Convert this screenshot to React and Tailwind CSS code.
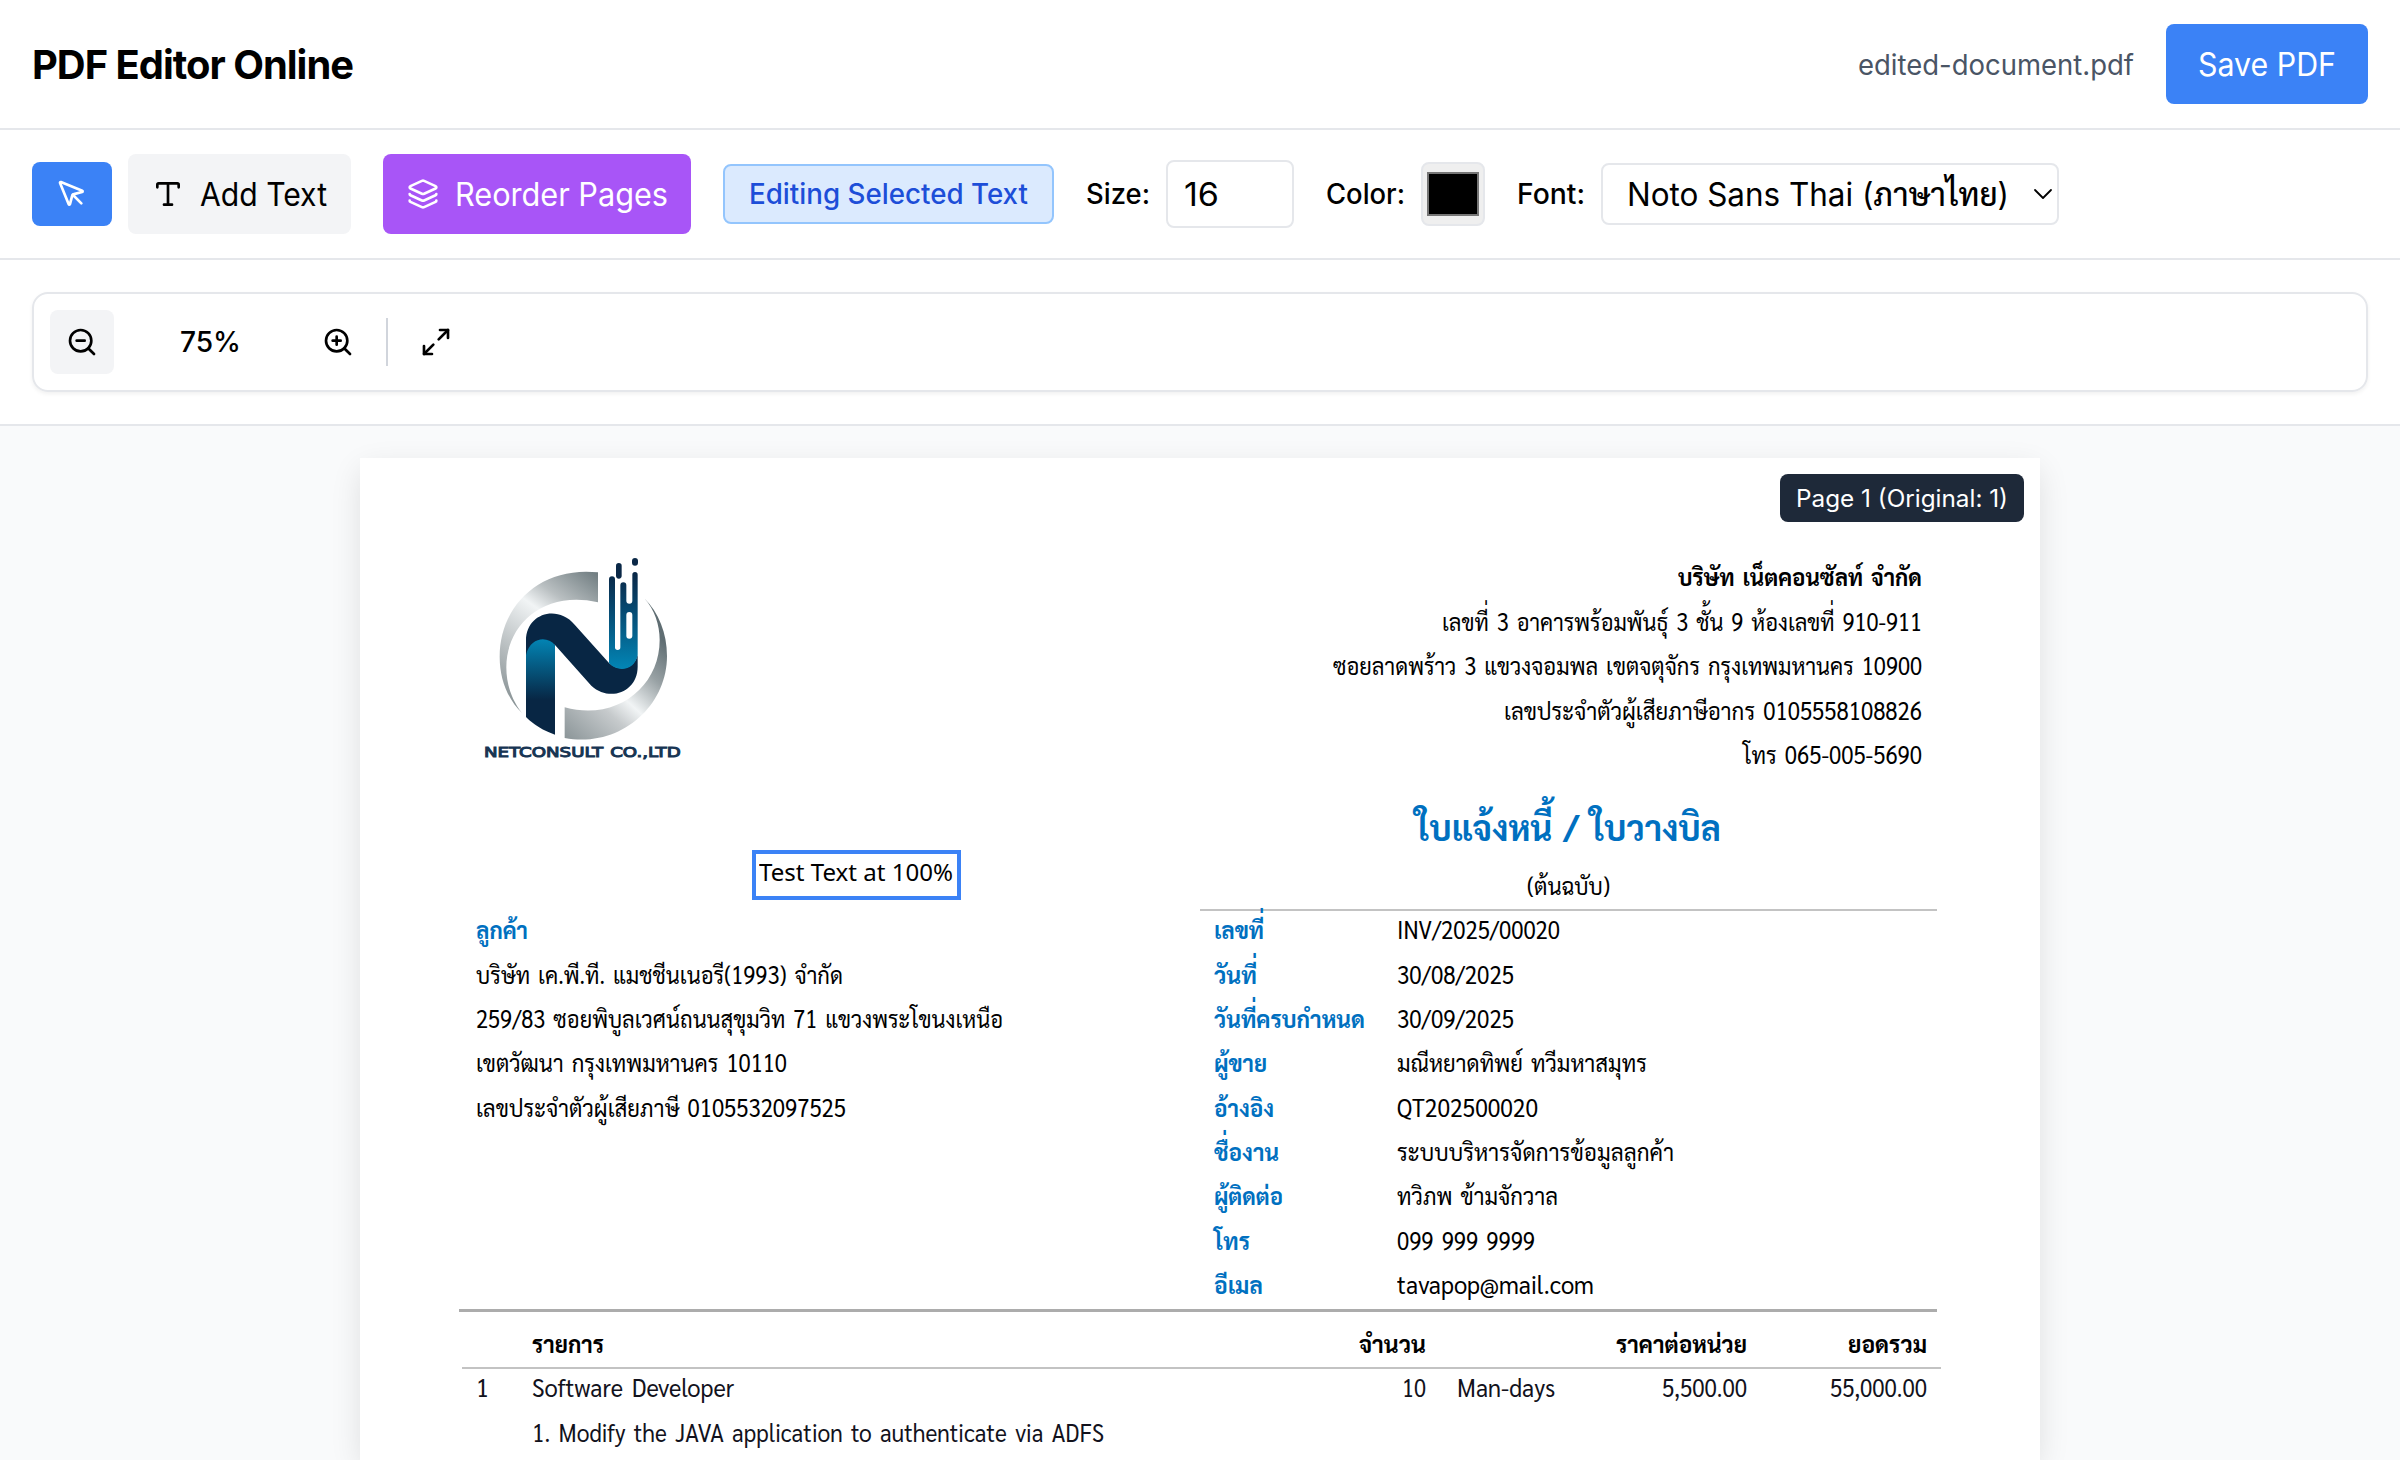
import { useLayoutEffect, useRef } from "react";
import { Layers, Maximize2, MousePointer, Type, ZoomIn, ZoomOut } from "lucide-react";

const UI = "font-['Inter','Sarabun','Noto_Sans',sans-serif]";
const DOC = "font-['Sarabun','Noto_Sans',sans-serif] [word-spacing:3px]";

/* Sets a single line of text to an exact width. */
function Fit({ w, children, className = "" }) {
  const outer = useRef(null);
  const inner = useRef(null);
  useLayoutEffect(() => {
    inner.current.style.transform = "none";
    const natural = inner.current.getBoundingClientRect().width;
    outer.current.style.width = `${w}px`;
    inner.current.style.transform = `scaleX(${w / natural})`;
  }, [w, children]);
  return (
    <span ref={outer} className={`inline-flex shrink-0 whitespace-nowrap ${className}`}>
      <span ref={inner} className="inline-block shrink-0 origin-left whitespace-nowrap">
        {children}
      </span>
    </span>
  );
}

/* Interface text sits slightly below the optical centre of its control. */
function Label({ w, children }) {
  return (
    <Fit w={w} className="pt-0.5">
      {children}
    </Fit>
  );
}

function Header() {
  return (
    <header className="flex h-[130px] items-center justify-between border-b-2 border-gray-200 px-8">
      <h1 className="flex text-[40px] leading-[56px] font-bold tracking-tight">
        <Label w={321}>PDF Editor Online</Label>
      </h1>
      <div className="flex items-center gap-8">
        <span className="flex text-[28px] leading-10 text-gray-600">
          <Label w={276}>edited-document.pdf</Label>
        </span>
        <button className="flex h-20 w-[202px] items-center justify-center rounded-lg bg-[#3b82f6] text-[32px] leading-[48px] text-white">
          <Label w={138}>Save PDF</Label>
        </button>
      </div>
    </header>
  );
}

function Toolbar() {
  return (
    <div className="flex h-[130px] items-center border-b-2 border-gray-200 px-8 text-[32px] leading-[48px]">
      <button className="flex h-16 w-20 items-center justify-center rounded-lg bg-[#3b82f6] text-white">
        <MousePointer size={32} />
      </button>
      <button className="ml-4 flex h-20 w-[223px] items-center gap-4 rounded-lg bg-gray-100 pl-6">
        <Type size={32} />
        <Label w={127}>Add Text</Label>
      </button>
      <button className="ml-8 flex h-20 w-[308px] items-center gap-4 rounded-lg bg-[#a855f7] pl-6 text-white">
        <Layers size={32} />
        <Label w={213}>Reorder Pages</Label>
      </button>
      <div className="ml-8 flex h-[60px] w-[331px] items-center justify-center rounded-lg border-2 border-[#93c5fd] bg-[#dbeafe] text-[28px] font-medium text-[#1d4ed8]">
        <Fit w={279}>Editing Selected Text</Fit>
      </div>
      <label className="ml-8 flex items-center gap-4 text-[28px] font-medium">
        <Fit w={64}>Size:</Fit>
        <span className="flex h-[68px] w-32 items-center rounded-lg border-2 border-gray-200 pl-4 text-[32px] font-normal">
          <Label w={35}>16</Label>
        </span>
      </label>
      <label className="ml-8 flex items-center gap-4 text-[28px] font-medium">
        <Fit w={79}>Color:</Fit>
        <span className="flex size-16 items-center justify-center rounded-lg border-2 border-gray-200 bg-[#efefef]">
          <span className="h-11 w-[52px] border-2 border-[#767676] bg-black" />
        </span>
      </label>
      <label className="ml-8 flex items-center gap-4 text-[28px] font-medium">
        <Fit w={68}>Font:</Fit>
        <span className="flex h-[62px] w-[458px] items-center rounded-lg border-2 border-gray-200 pl-6 text-[32px] font-normal">
          <Label w={382}>
            Noto Sans Thai (<span className="font-medium">ภาษาไทย</span>)
          </Label>
          <svg className="ml-[24px]" width="20" height="12" viewBox="0 0 20 12" fill="none" stroke="currentColor" strokeWidth="1.8" strokeLinecap="round" strokeLinejoin="round">
            <path d="M2 2l8 8 8-8" />
          </svg>
        </span>
      </label>
    </div>
  );
}

function ZoomBar() {
  return (
    <div className="border-b-2 border-gray-200 px-8 pt-8 pb-8">
      <div className="flex h-[100px] items-center gap-4 rounded-2xl border-2 border-gray-200 px-4 shadow-[0_2px_4px_rgba(0,0,0,0.06)]">
        <button className="flex size-16 items-center justify-center rounded-lg bg-gray-100">
          <ZoomOut size={32} />
        </button>
        <span className="flex w-40 justify-center text-[28px] leading-10 font-medium">
          <Fit w={61}>75%</Fit>
        </span>
        <button className="flex size-16 items-center justify-center">
          <ZoomIn size={32} />
        </button>
        <span className="h-12 w-0.5 bg-gray-300" />
        <button className="flex size-16 items-center justify-center">
          <Maximize2 size={32} />
        </button>
      </div>
    </div>
  );
}

function Logo() {
  return (
    <svg width="260" height="250" viewBox="0 0 780 750" role="img" aria-label="Netconsult">
      <defs>
        <linearGradient id="ringTop" x1="120" y1="540" x2="415" y2="130" gradientUnits="userSpaceOnUse">
          <stop offset="0" stopColor="#7d888b" />
          <stop offset="0.3" stopColor="#b4babc" />
          <stop offset="0.62" stopColor="#f1f4f5" />
          <stop offset="0.75" stopColor="#b9bfc1" />
          <stop offset="1" stopColor="#6f7c80" />
        </linearGradient>
        <linearGradient id="ringBottom" x1="610" y1="330" x2="330" y2="640" gradientUnits="userSpaceOnUse">
          <stop offset="0" stopColor="#5f6d72" />
          <stop offset="0.25" stopColor="#98a1a4" />
          <stop offset="0.5" stopColor="#f1f4f5" />
          <stop offset="0.65" stopColor="#c6cacc" />
          <stop offset="1" stopColor="#8b9598" />
        </linearGradient>
        <linearGradient id="stemLeft" x1="0" y1="325" x2="0" y2="510" gradientUnits="userSpaceOnUse">
          <stop offset="0" stopColor="#0285b5" />
          <stop offset="1" stopColor="#082644" />
        </linearGradient>
        <linearGradient id="stemRight" x1="0" y1="130" x2="0" y2="415" gradientUnits="userSpaceOnUse">
          <stop offset="0" stopColor="#0a2847" />
          <stop offset="0.35" stopColor="#07466d" />
          <stop offset="1" stopColor="#0285b5" />
        </linearGradient>
      </defs>
      <path d="M414 127C240 108 119 228 119 380C119 450 145 510 186 549C155 510 139 462 139 412C139 285 250 180 414 217Z" fill="url(#ringTop)" />
      <path d="M553 205C584 240 599 285 599 330C599 470 470 575 314 532V624C480 655 621 530 621 378C621 310 596 248 553 205Z" fill="url(#ringBottom)" />
      <path d="M198 365C210 315 275 315 285 345V614C250 602 222 585 198 561Z" fill="url(#stemLeft)" />
      <path d="M198 375V332C198 252 290 222 344 284L447 399C475 425 520 420 533 375V410C533 485 450 518 394 467L285 345C262 318 212 320 198 375Z" fill="#082644" />
      <path d="M447 399V148A9 9 0 0 1 465 148V352A8 8 0 0 0 481 352V166A9 9 0 0 1 499 166V212A9 9 0 0 0 517 212V134A8 8 0 0 1 533 134V375C525 420 475 430 447 399Z" fill="url(#stemRight)" />
      <rect x="499" y="246" width="18" height="80" rx="9" fill="#fff" />
      <rect x="468" y="99" width="17" height="47" rx="8.5" fill="#0a2847" />
      <rect x="516" y="84" width="18" height="23" rx="9" fill="#0a2847" />
      <text x="72" y="682" fontFamily="'DejaVu Sans', sans-serif" fontSize="42" fill="#173553" stroke="#173553" strokeWidth="3" textLength="590" lengthAdjust="spacingAndGlyphs">
        NETCONSULT CO.,LTD
      </text>
    </svg>
  );
}

const ROW = "flex h-[44.35px] items-center leading-[44px]";

const company = [
  ["เลขที่ 3 อาคารพร้อมพันธุ์ 3 ชั้น 9 ห้องเลขที่ 910-911", 480],
  ["ซอยลาดพร้าว 3 แขวงจอมพล เขตจตุจักร กรุงเทพมหานคร 10900", 589],
  ["เลขประจำตัวผู้เสียภาษีอากร 0105558108826", 418],
  ["โทร 065-005-5690", 179],
];

const customer = [
  ["บริษัท เค.พี.ที. แมชชีนเนอรี(1993) จำกัด", 367],
  ["259/83 ซอยพิบูลเวศน์ถนนสุขุมวิท 71 แขวงพระโขนงเหนือ", 527],
  ["เขตวัฒนา กรุงเทพมหานคร 10110", 311],
  ["เลขประจำตัวผู้เสียภาษี 0105532097525", 370],
];

const details = [
  ["เลขที่", 50, "INV/2025/00020", 163],
  ["วันที่", 43, "30/08/2025", 117],
  ["วันที่ครบกำหนด", 151, "30/09/2025", 117],
  ["ผู้ขาย", 53, "มณีหยาดทิพย์ ทวีมหาสมุทร", 250],
  ["อ้างอิง", 60, "QT202500020", 141],
  ["ชื่องาน", 65, "ระบบบริหารจัดการข้อมูลลูกค้า", 277],
  ["ผู้ติดต่อ", 69, "ทวิภพ ข้ามจักวาล", 161],
  ["โทร", 36, "099 999 9999", 138],
  ["อีเมล", 49, "tavapop@mail.com", 197],
];

function Page() {
  return (
    <div className={`relative h-[1002px] w-[1680px] bg-white text-[24.5px] text-black shadow-[0_10px_30px_-2px_rgba(0,0,0,0.12)] ${DOC}`}>
      <div className={`absolute top-4 right-4 flex h-12 w-[244px] items-center justify-center rounded-lg bg-gray-800 text-[24px] leading-8 text-white [word-spacing:normal] ${UI}`}>
        <Label w={212}>Page 1 (Original: 1)</Label>
      </div>
      <div className="absolute top-[392px] left-[392px] flex h-[50px] w-[209px] border-4 border-[#3b82f6] pl-[3px] font-['Noto_Sans',sans-serif] text-[24px] leading-9 [word-spacing:normal]">
        <Fit w={194}>Test Text at 100%</Fit>
      </div>

      <section className="flex h-[449px] justify-between pl-[100px]">
        <div className="pt-[72px]">
          <Logo />
        </div>
        <div className="flex w-[840px] flex-col pt-[96px]">
          <div className="flex flex-col items-end pr-[118px]">
            <div className={`${ROW} font-bold`}>
              <Fit w={244}>บริษัท เน็ตคอนซัลท์ จำกัด</Fit>
            </div>
            {company.map(([t, w]) => (
              <div key={t} className="flex h-[44.5px] items-center leading-[44px]">
                <Fit w={w}>{t}</Fit>
              </div>
            ))}
          </div>
          <div className="mt-[20px] flex w-[736px] flex-col items-center">
            <div className="flex h-[66px] text-[36px] leading-[60px] font-bold text-[#0070c0]">
              <Fit w={306}>ใบแจ้งหนี้ / ใบวางบิล</Fit>
            </div>
            <div className={ROW}>
              <Fit w={83}>(ต้นฉบับ)</Fit>
            </div>
          </div>
        </div>
      </section>

      <section className="flex justify-between pr-[103px] pl-[116px]">
        <div className="flex flex-col">
          <div className={`${ROW} font-bold text-[#0070c0]`}>
            <Fit w={52}>ลูกค้า</Fit>
          </div>
          {customer.map(([t, w]) => (
            <div key={t} className={ROW}>
              <Fit w={w}>{t}</Fit>
            </div>
          ))}
        </div>
        <div className="flex w-[737px] flex-col pt-0.5">
          <div className="h-0.5 shrink-0 bg-[#c3c3c3]" />
          <div className="-mt-1 pl-3.5">
            {details.map(([label, lw, value, vw]) => (
              <div key={label} className={ROW}>
                <div className="flex w-[183px] shrink-0 font-bold text-[#0070c0]">
                  <Fit w={lw}>{label}</Fit>
                </div>
                <Fit w={vw}>{value}</Fit>
              </div>
            ))}
          </div>
        </div>
      </section>

      <section className="pt-[3px]">
        <div className="mr-[103px] ml-[99px] h-[3px] bg-[#acacac]" />
        <div className="mt-[6px] mr-[99px] ml-[102px] flex h-[51px] items-center border-b-2 border-[#c3c3c3] leading-[44px] font-bold">
          <div className="flex w-[664px] pl-[70px]">
            <Fit w={72}>รายการ</Fit>
          </div>
          <div className="flex w-[300px] justify-end">
            <Fit w={67}>จำนวน</Fit>
          </div>
          <div className="flex w-[321px] justify-end">
            <Fit w={131}>ราคาต่อหน่วย</Fit>
          </div>
          <div className="flex w-[180px] justify-end">
            <Fit w={79}>ยอดรวม</Fit>
          </div>
        </div>
        <div className={`${ROW} -mt-[4px] mr-[99px] ml-[102px] text-[#12121c]`}>
          <div className="flex w-[70px] pl-3.5">
            <Fit w={13}>1</Fit>
          </div>
          <div className="flex w-[594px]">
            <Fit w={202}>Software Developer</Fit>
          </div>
          <div className="flex w-[300px] justify-end">
            <Fit w={24}>10</Fit>
          </div>
          <div className="flex w-[129px] pl-[31px]">
            <Fit w={98}>Man-days</Fit>
          </div>
          <div className="flex w-[192px] justify-end">
            <Fit w={85}>5,500.00</Fit>
          </div>
          <div className="flex w-[180px] justify-end">
            <Fit w={97}>55,000.00</Fit>
          </div>
        </div>
        <div className={`${ROW} ml-[172px] text-[#12121c]`}>
          <Fit w={572}>1. Modify the JAVA application to authenticate via ADFS</Fit>
        </div>
      </section>
    </div>
  );
}

export default function App() {
  return (
    <div className={`flex h-[1460px] w-[2400px] flex-col overflow-hidden bg-white text-black ${UI}`}>
      <Header />
      <Toolbar />
      <ZoomBar />
      <main className="flex flex-1 justify-center overflow-hidden bg-gray-50 pt-8">
        <Page />
      </main>
    </div>
  );
}
